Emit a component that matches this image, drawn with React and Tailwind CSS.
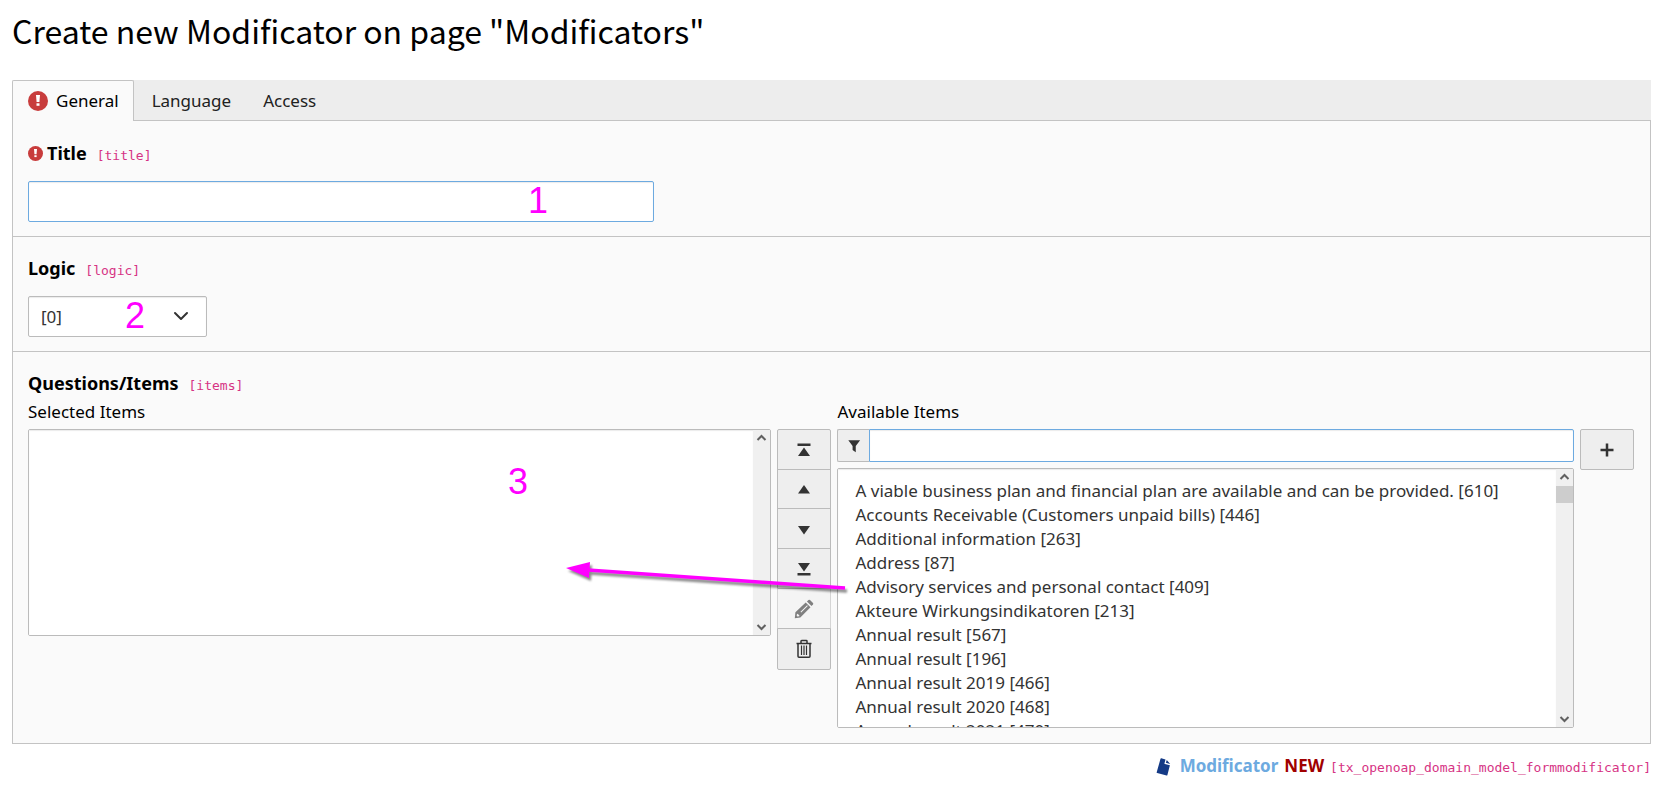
const code = 'font-["DejaVu_Sans_Mono",monospace] text-[13px] font-normal text-[#d63384]';
const iconButton =
  'flex w-full items-center justify-center border border-[#bbb] bg-[#eee] text-[#333]';

const items = [
  'A viable business plan and financial plan are available and can be provided. [610]',
  'Accounts Receivable (Customers unpaid bills) [446]',
  'Additional information [263]',
  'Address [87]',
  'Advisory services and personal contact [409]',
  'Akteure Wirkungsindikatoren [213]',
  'Annual result [567]',
  'Annual result [196]',
  'Annual result 2019 [466]',
  'Annual result 2020 [468]',
  'Annual result 2021 [470]',
  'Annual result 2022 [472]',
];

function Alert({ className }) {
  return (
    <svg className={className} viewBox="0 0 20 20" aria-hidden="true">
      <circle cx="10" cy="10" r="10" fill="#c83c3c" />
      <path d="M8 4h4l-.6 7H8.600z" fill="#fff" />
      <rect x="8.500" y="12.300" width="3" height="2.500" fill="#fff" />
    </svg>
  );
}

function Glyph({ children, className = 'size-4' }) {
  return (
    <svg className={className} viewBox="0 0 16 16" fill="currentColor" aria-hidden="true">
      {children}
    </svg>
  );
}

function ScrollBar({ thumb }) {
  return (
    <div className="flex w-[17px] shrink-0 flex-col items-center bg-[#f0f0f0]" aria-hidden="true">
      <svg className="h-[17px] w-[17px]" viewBox="0 0 17 17" fill="none" stroke="#606060" strokeWidth="2">
        <path d="M4.500 10l4-4 4 4" />
      </svg>
      {thumb && <div className="h-[17px] w-full bg-[#cdcdcd]" />}
      <div className="flex-1" />
      <svg className="h-[17px] w-[17px]" viewBox="0 0 17 17" fill="none" stroke="#606060" strokeWidth="2">
        <path d="M4.500 7l4 4 4-4" />
      </svg>
    </div>
  );
}

function Marker({ className, children }) {
  return (
    <span
      className={`pointer-events-none absolute font-["Liberation_Sans",sans-serif] text-[36px] leading-9 text-[#ff00ff] ${className}`}
    >
      {children}
    </span>
  );
}

export default function App() {
  return (
    <main className='min-h-screen bg-white pr-[18px] pl-3 font-["Noto_Sans",sans-serif] text-[17px] leading-6 text-black'>
      <h1 className='pt-1.5 pb-[26px] font-["Noto_Sans_CJK_SC",sans-serif] text-[32px] leading-[48px]'>
        Create new Modificator on page "Modificators"
      </h1>

      <div role="tablist" className="flex h-[41px] gap-1 bg-[#ededed] shadow-[inset_0_-1px_0_#c3c3c3]">
        <button
          type="button"
          role="tab"
          aria-selected="true"
          className="flex items-center gap-2 rounded-t-[2px] border border-b-0 border-[#c3c3c3] bg-[#fafafa] pr-3.5 pl-[15px]"
        >
          <Alert className="size-5" />
          General
        </button>
        <button type="button" role="tab" aria-selected="false" className="px-3.5 text-[#212121]">
          Language
        </button>
        <button type="button" role="tab" aria-selected="false" className="px-3.5 text-[#212121]">
          Access
        </button>
      </div>

      <form className="border border-t-0 border-[#c3c3c3] bg-[#fafafa]">
        <section className="border-t border-transparent px-[15px] pt-[19px] pb-[14px]">
          <label htmlFor="title" className="mb-4 flex h-6 items-baseline text-lg/6 font-bold">
            <Alert className="mr-1 size-[15px] self-center" />
            Title
            <code className={`ml-2.5 ${code}`}>[title]</code>
          </label>
          <div className="relative">
            <input
              id="title"
              className="block h-[41px] w-full max-w-[626px] rounded-[2px] border border-[#6daae0] bg-white px-3 shadow-[inset_0_1px_1px_rgba(0,0,0,0.08)] outline-none"
            />
            <Marker className="top-0.5 left-[500px]">1</Marker>
          </div>
        </section>

        <section className="border-t border-[#c3c3c3] px-[15px] pt-[19px] pb-[14px]">
          <label htmlFor="logic" className="mb-4 flex h-6 items-baseline text-lg/6 font-bold">
            Logic
            <code className={`ml-2.5 ${code}`}>[logic]</code>
          </label>
          <div className="relative w-[179px]">
            <select
              id="logic"
              className="block h-[41px] w-full appearance-none rounded-[2px] border border-[#bbb] bg-white px-3 text-[#333] shadow-[inset_0_1px_1px_rgba(0,0,0,0.08)]"
            >
              <option>[0]</option>
            </select>
            <svg
              className="pointer-events-none absolute top-3 right-[18px] size-4"
              viewBox="0 0 16 16"
              fill="none"
              stroke="#333"
              strokeWidth="2"
              strokeLinecap="round"
              strokeLinejoin="round"
              aria-hidden="true"
            >
              <path d="M2 5l6 6 6-6" />
            </svg>
            <Marker className="top-0.5 left-[97px]">2</Marker>
          </div>
        </section>

        <section className="border-t border-[#c3c3c3] pt-[19px] pr-4 pb-[15px] pl-[15px]">
          <h2 className="flex h-6 items-baseline text-lg/6 font-bold">
            Questions/Items
            <code className={`ml-2.5 ${code}`}>[items]</code>
          </h2>
          <div className="relative mt-[5px] grid grid-cols-[744fr_54px_737fr_54px] items-start gap-x-1.5 gap-y-[5px]">
            <label htmlFor="selected" className="col-span-2">
              Selected Items
            </label>
            <label htmlFor="available" className="col-span-2">
              Available Items
            </label>

            <div className="flex h-[207px] overflow-hidden rounded-[2px] border border-[#bbb] bg-white">
              <select
                id="selected"
                multiple
                className="min-w-0 flex-1 appearance-none bg-white shadow-[inset_0_1px_1px_rgba(0,0,0,0.08)] [scrollbar-width:none]"
              />
              <ScrollBar />
            </div>

            <div className="flex flex-col">
              <button type="button" aria-label="Move to top" className={`h-[41px] rounded-t-[2px] ${iconButton}`}>
                <Glyph>
                  <path d="M1.500 1.500h13v2.500h-13zM8 5.500l6 8.500H2z" />
                </Glyph>
              </button>
              <button type="button" aria-label="Move up" className={`-mt-px h-10 ${iconButton}`}>
                <Glyph>
                  <path d="M8 4l6 8.500H2z" />
                </Glyph>
              </button>
              <button type="button" aria-label="Move down" className={`-mt-px h-[41px] ${iconButton}`}>
                <Glyph>
                  <path d="M8 13.500L2 5h12z" />
                </Glyph>
              </button>
              <button type="button" aria-label="Move to bottom" className={`-mt-px h-[41px] ${iconButton}`}>
                <Glyph>
                  <path d="M8 10.500L2 2h12zM1.500 12h13v2.500h-13z" />
                </Glyph>
              </button>
              <button
                type="button"
                disabled
                aria-label="Edit"
                className="-mt-px flex h-[41px] w-full items-center justify-center border border-[#d5d5d5] border-t-[#bbb] bg-[#f4f4f4] text-[#808080]"
              >
                <svg className="size-5" viewBox="0 0 20 20" fill="currentColor" aria-hidden="true">
                  <path
                    fillRule="evenodd"
                    d="M.8 19.200l.6-6L11.700 3.500l4.800 4.800L6.300 18.600zM2.900 15.200l-.2 1.600.7.700 1.800-.3.200-.7-1.700-1.700zM6.500 12.700l.7.700 6.600-6.500-.7-.7z"
                  />
                  <path d="M12.900 2.500l1.600-1.500q.8-.6 1.500 0l3 3q.6.700 0 1.500l-1.500 1.600z" />
                </svg>
              </button>
              <button type="button" aria-label="Delete" className={`-mt-px h-[42px] rounded-b-[2px] ${iconButton}`}>
                <svg className="size-5" viewBox="0 0 20 20" fill="none" stroke="currentColor" aria-hidden="true">
                  <path d="M2.500 4.500h15" strokeWidth="1.500" />
                  <path d="M7 4V2.200q0-.7.7-.7h4.600q.7 0 .7.700V4M4 4.500v12.800q0 1 1 1h10q1 0 1-1V4.500" strokeWidth="1.500" />
                  <path d="M7.500 6.500v9.500M10 6.500v9.500M12.500 6.500v9.500" strokeWidth="1.200" />
                </svg>
              </button>
            </div>

            <div>
              <div className="flex h-[33px]">
                <label
                  htmlFor="filter"
                  aria-label="Filter"
                  className="flex w-8 items-center justify-center rounded-l-[2px] border border-r-0 border-[#bbb] bg-[#eee] text-[#333]"
                >
                  <Glyph className="size-3.5">
                    <path d="M1.500 1.500h13.500L10 8v7l-3.600-2.500V8z" />
                  </Glyph>
                </label>
                <input
                  id="filter"
                  className="min-w-0 flex-1 rounded-r-[2px] border border-[#6daae0] bg-white px-3 shadow-[inset_0_1px_1px_rgba(0,0,0,0.08)] outline-none"
                />
              </div>
              <div className="mt-1.5 flex h-[260px] overflow-hidden rounded-[2px] border border-[#bbb] bg-white">
                <select
                  id="available"
                  multiple
                  className="h-full min-w-0 flex-1 appearance-none bg-white px-[17px] pt-2.5 text-[#333] shadow-[inset_0_1px_1px_rgba(0,0,0,0.08)] [scrollbar-width:none]"
                >
                  {items.map((item) => (
                    <option key={item} className="h-6 p-0 leading-6">
                      {item}
                    </option>
                  ))}
                </select>
                <ScrollBar thumb />
              </div>
            </div>

            <button type="button" aria-label="Add" className={`h-[41px] rounded-[2px] ${iconButton}`}>
              <Glyph>
                <path d="M6.750 1.500h2.500v5.250h5.250v2.500H9.250v5.250h-2.500V9.250H1.500v-2.500h5.250z" />
              </Glyph>
            </button>

            <Marker className="top-[64px] left-[480px]">3</Marker>
            <svg
              className="pointer-events-none absolute top-[156px] left-[536px] h-10 w-[290px] drop-shadow-[2px_3px_1px_rgba(0,0,0,0.45)]"
              viewBox="0 0 290 40"
              aria-hidden="true"
            >
              <path d="M24 14L281 32" stroke="#ff00ff" strokeWidth="3.500" />
              <path d="M2 12L26 6l-1 16z" fill="#ff00ff" />
            </svg>
          </div>
        </section>
      </form>

      <footer className="flex items-baseline justify-end pt-2.5 font-bold">
        <svg className="mr-2 h-[18px] w-4 self-center" viewBox="0 0 16 18" aria-hidden="true">
          <path
            d="M4.500.8q.2-.6.800-.5l4.200 1.100-1 3.800q-.1.600.4.800l5 1.300-2.500 9.800q-.2.600-.8.500L1.200 15.100q-.6-.2-.5-.8z"
            fill="#143a86"
          />
          <path d="M10.800 2l3.400 4-4.400-1.200z" fill="#143a86" />
        </svg>
        <a href="#modificator" className="text-[#6daae0]">
          Modificator
        </a>
        <span className="ml-1.5 text-[#a00000]">NEW</span>
        <code className={`ml-1.5 ${code}`}>[tx_openoap_domain_model_formmodificator]</code>
      </footer>
    </main>
  );
}
